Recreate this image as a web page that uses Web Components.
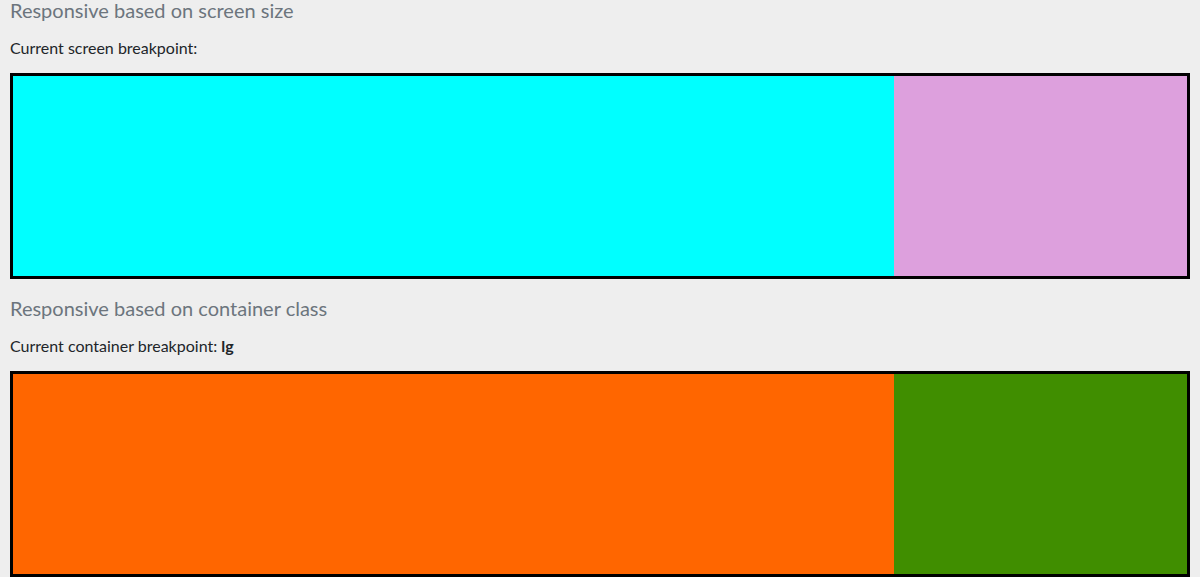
<!DOCTYPE html>
<html lang="en">
<head>
<meta charset="utf-8">
<meta name="viewport" content="width=device-width, initial-scale=1">
<title>Responsive layouts</title>
<style>
  body { margin: 0; background: #eee; color: #212529; font: 16px/22px Lato, "Open Sans", sans-serif; }
</style>
</head>
<body>
<responsive-page>
  <responsive-section>
    <span slot="title">Responsive based on screen size</span>
    <span slot="status">Current screen breakpoint:</span>
    <split-box style="--main: #00ffff; --side: #dda0dd"></split-box>
  </responsive-section>
  <responsive-section>
    <span slot="title">Responsive based on container class</span>
    <span slot="status">Current container breakpoint: <b>lg</b></span>
    <split-box style="--main: #ff6600; --side: #408e00"></split-box>
  </responsive-section>
</responsive-page>
<script>
  class ShadowElement extends HTMLElement {
    constructor() {
      super();
      this.attachShadow({ mode: 'open' }).innerHTML = this.constructor.markup;
    }
  }

  customElements.define('responsive-page', class extends ShadowElement {
    static markup = `
      <style>
        :host { display: block; }
        main { display: flex; flex-direction: column; gap: 19px; padding: 0 10px; }
      </style>
      <main><slot></slot></main>`;
  });

  customElements.define('responsive-section', class extends ShadowElement {
    static markup = `
      <style>
        :host { display: block; }
        h2 { margin: 0 0 17px; font-size: 20px; font-weight: 400; line-height: 20px; color: #6c757d; }
        p { margin: 0 0 14px; }
      </style>
      <section>
        <h2><slot name="title"></slot></h2>
        <p><slot name="status"></slot></p>
        <slot></slot>
      </section>`;
  });

  customElements.define('split-box', class extends ShadowElement {
    static markup = `
      <style>
        :host { display: grid; grid-template-columns: 3fr 1fr; min-height: 200px; border: 3px solid #000; }
        .main { background: var(--main); }
        .side { background: var(--side); }
      </style>
      <div class="main"></div>
      <div class="side"></div>`;
  });
</script>
</body>
</html>
